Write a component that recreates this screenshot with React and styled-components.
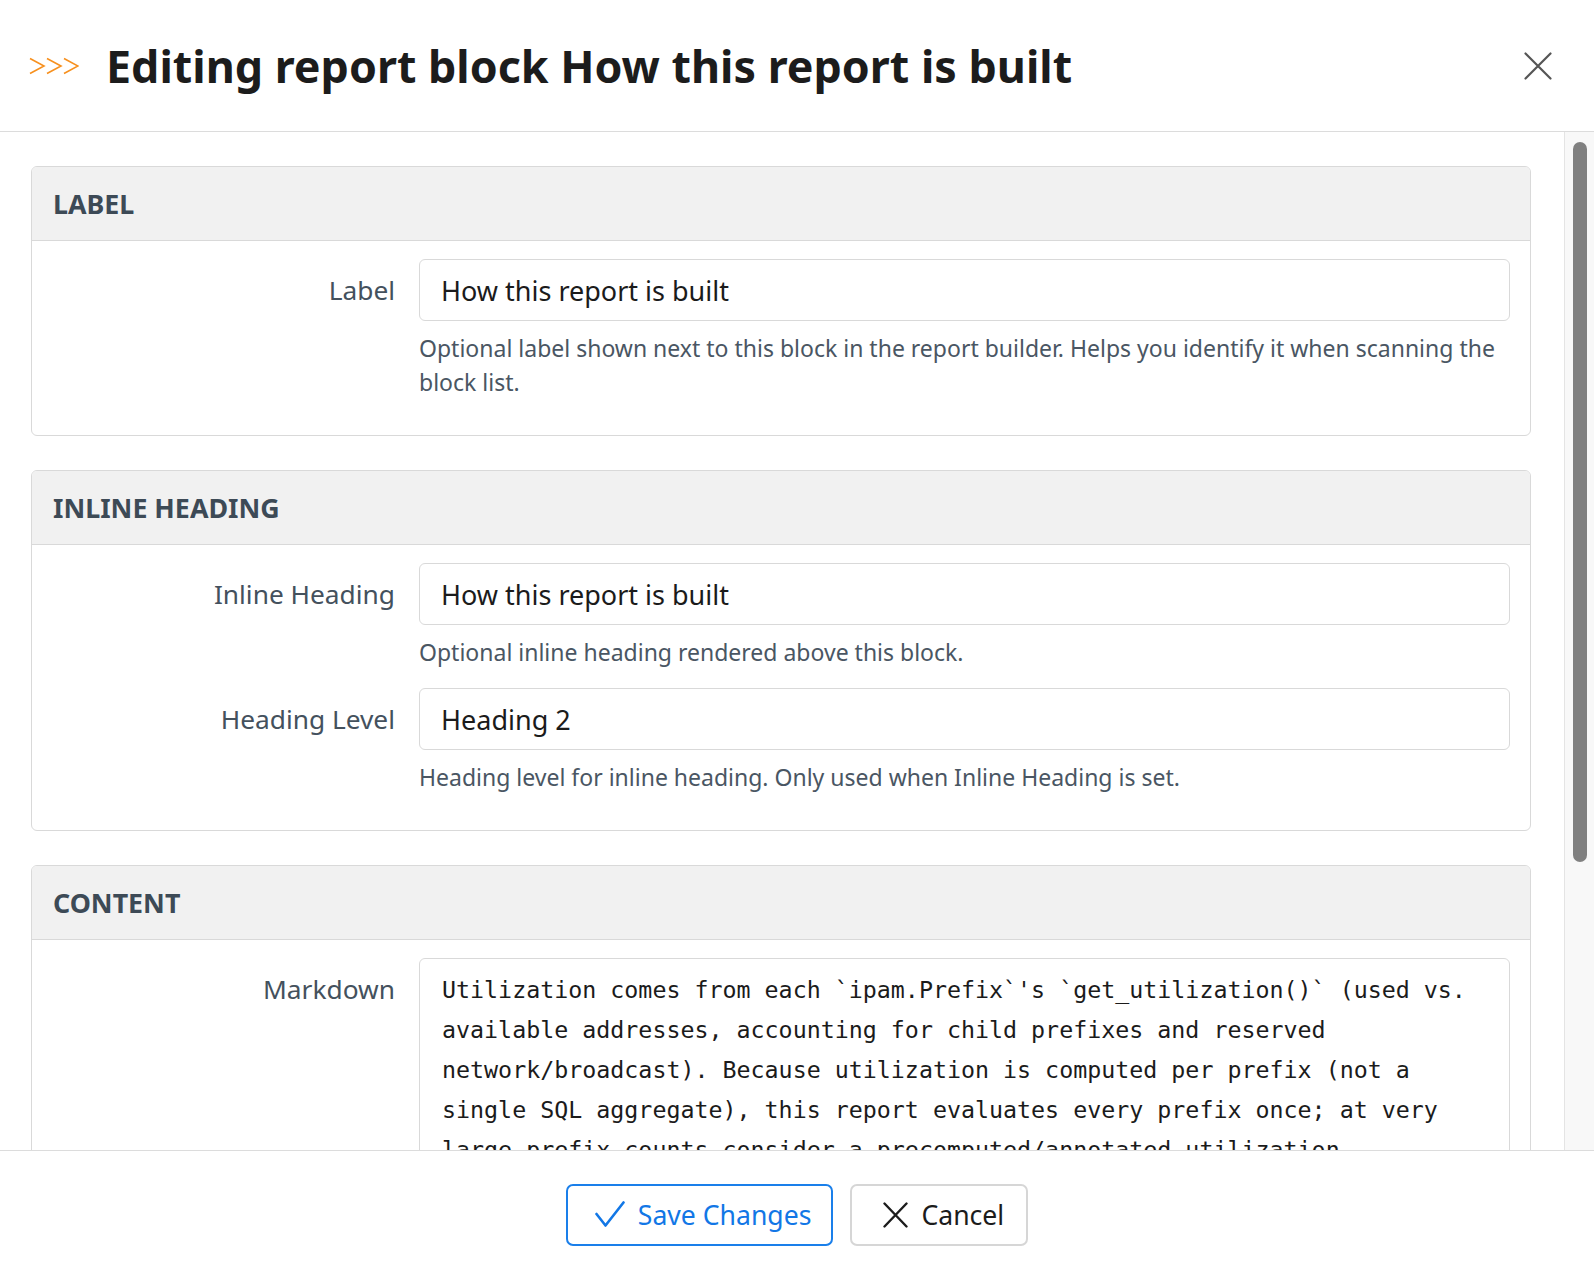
import React from 'react';
import styled, { createGlobalStyle } from 'styled-components';

const Global = createGlobalStyle`
  html, body, #root {
    height: 100%;
  }
  body {
    margin: 0;
    background: #fff;
    font-family: "Noto Sans", "Open Sans", sans-serif;
    color: #1b1b1b;
  }
  * { box-sizing: border-box; }
`;

const Modal = styled.div`
  height: 100vh;
  display: flex;
  flex-direction: column;
  background: #fff;
`;

const Header = styled.header`
  height: 132px;
  flex: none;
  display: flex;
  align-items: center;
  padding: 0 42px 0 29px;
  border-bottom: 1px solid #dcdcdc;
`;

const Arrows = styled.svg`
  flex: none;
  margin-right: 27px;
`;

const Title = styled.h1`
  flex: 1;
  margin: 0;
  font-size: 44.8px;
  font-weight: 700;
  color: #1c1c1c;
`;

const CloseBtn = styled.button`
  border: 0;
  background: none;
  padding: 0;
  display: flex;
  cursor: pointer;
`;

const Body = styled.div`
  flex: 1;
  min-height: 0;
  display: flex;
`;

const Scroller = styled.div`
  flex: 1;
  overflow: hidden;
  padding: 34px 33px 0 31px;
  display: flex;
  flex-direction: column;
  gap: 34px;
`;

const Track = styled.div`
  flex: none;
  width: 30px;
  padding: 10px 7px 0 8px;
  background: #f8f8f8;
  border-left: 1px solid #e4e4e4;
`;

const Thumb = styled.div`
  height: ${p => p.$size}px;
  border-radius: 7px;
  background: #808080;
`;

const Card = styled.section`
  flex: none;
  border: 1px solid #d9d9d9;
  border-radius: 6px;
  overflow: hidden;
`;

const CardHead = styled.div`
  height: 74px;
  display: flex;
  align-items: center;
  padding: 0 21px;
  background: #f1f1f1;
  border-bottom: 1px solid #d9d9d9;
  font-size: 26.8px;
  font-weight: 700;
  color: #3d4a56;
  text-transform: uppercase;
`;

const CardBody = styled.div`
  padding: 18px 20px 17px 0;
`;

const Row = styled.div`
  display: grid;
  grid-template-columns: 375px 1fr;
  margin-bottom: 19px;
`;

const Label = styled.label`
  padding-right: 12px;
  text-align: right;
  font-size: 26.3px;
  line-height: 62px;
  color: #44515d;
`;

const Field = styled.div`
  padding-left: 12px;
  min-width: 0;
`;

const Input = styled.input`
  width: 100%;
  height: 62px;
  border: 1px solid #d9d9d9;
  border-radius: 6px;
  padding: 0 21px;
  font-family: inherit;
  font-size: 27px;
  color: #1b1b1b;
  outline: none;
`;

const TextArea = styled.textarea`
  display: block;
  width: 100%;
  height: ${p => p.$height}px;
  border: 1px solid #d9d9d9;
  border-radius: 6px;
  padding: 11px 22px;
  font-family: "DejaVu Sans Mono", "Liberation Mono", monospace;
  font-size: 23.3px;
  line-height: 40px;
  color: #1b1b1b;
  resize: none;
  overflow: hidden;
  outline: none;
`;

const Help = styled.div`
  margin-top: 10px;
  font-size: 23px;
  line-height: 34px;
  color: #4a5663;
`;

const Footer = styled.footer`
  height: 128px;
  flex: none;
  display: flex;
  align-items: center;
  justify-content: center;
  gap: 17px;
  border-top: 1px solid #dcdcdc;
`;

const Button = styled.button`
  height: 62px;
  display: flex;
  align-items: center;
  gap: 13px;
  padding: 0 ${p => (p.$primary ? 20 : 22)}px 0 ${p => (p.$primary ? 27 : 31)}px;
  background: #fff;
  border: 2px solid ${p => (p.$primary ? '#1a7fea' : '#d6d6d6')};
  border-radius: 7px;
  font-family: inherit;
  font-size: 26.6px;
  color: ${p => (p.$primary ? '#1277e6' : '#1c1c1c')};
  cursor: pointer;

  svg {
    flex: none;
  }
`;

const markdown =
  "Utilization comes from each `ipam.Prefix`'s `get_utilization()` (used vs. available addresses, accounting for child prefixes and reserved network/broadcast). Because utilization is computed per prefix (not a single SQL aggregate), this report evaluates every prefix once; at very large prefix counts consider a precomputed/annotated utilization annotation.";

function FormRow({ label, help, children }) {
  return (
    <Row>
      <Label>{label}</Label>
      <Field>
        {children}
        {help && <Help>{help}</Help>}
      </Field>
    </Row>
  );
}

export default function App() {
  return (
    <Modal>
      <Global />
      <Header>
        <Arrows width="50" height="18" viewBox="0 0 50 18" fill="none" stroke="#f7901e" strokeWidth="1.6">
          <path d="M1 1.5 L15 9 L1 16.5" />
          <path d="M18 1.5 L32 9 L18 16.5" />
          <path d="M35 1.5 L49 9 L35 16.5" />
        </Arrows>
        <Title>Editing report block How this report is built</Title>
        <CloseBtn aria-label="Close">
          <svg width="28" height="28" viewBox="0 0 28 28" stroke="#555" strokeWidth="2.2" strokeLinecap="round">
            <path d="M1.5 1.5 L26.5 26.5 M26.5 1.5 L1.5 26.5" />
          </svg>
        </CloseBtn>
      </Header>

      <Body>
        <Scroller>
          <Card>
            <CardHead>Label</CardHead>
            <CardBody>
              <FormRow
                label="Label"
                help="Optional label shown next to this block in the report builder. Helps you identify it when scanning the block list."
              >
                <Input defaultValue="How this report is built" />
              </FormRow>
            </CardBody>
          </Card>

          <Card>
            <CardHead>Inline Heading</CardHead>
            <CardBody>
              <FormRow label="Inline Heading" help="Optional inline heading rendered above this block.">
                <Input defaultValue="How this report is built" />
              </FormRow>
              <FormRow label="Heading Level" help="Heading level for inline heading. Only used when Inline Heading is set.">
                <Input defaultValue="Heading 2" />
              </FormRow>
            </CardBody>
          </Card>

          <Card>
            <CardHead>Content</CardHead>
            <CardBody>
              <FormRow label="Markdown" help="Markdown content rendered for this block.">
                <TextArea $height={458} defaultValue={markdown} />
              </FormRow>
            </CardBody>
          </Card>
        </Scroller>
        <Track>
          <Thumb $size={720} />
        </Track>
      </Body>

      <Footer>
        <Button $primary>
          <svg width="30" height="27" viewBox="0 0 30 27" fill="none" stroke="currentColor" strokeWidth="2.6" strokeLinecap="round" strokeLinejoin="round">
            <path d="M1.5 13 L10.5 24.5 L28.5 1.5" />
          </svg>
          Save Changes
        </Button>
        <Button>
          <svg width="25" height="26" viewBox="0 0 25 26" fill="none" stroke="currentColor" strokeWidth="2.4" strokeLinecap="round">
            <path d="M1.5 1.5 L23.5 24.5 M23.5 1.5 L1.5 24.5" />
          </svg>
          Cancel
        </Button>
      </Footer>
    </Modal>
  );
}
